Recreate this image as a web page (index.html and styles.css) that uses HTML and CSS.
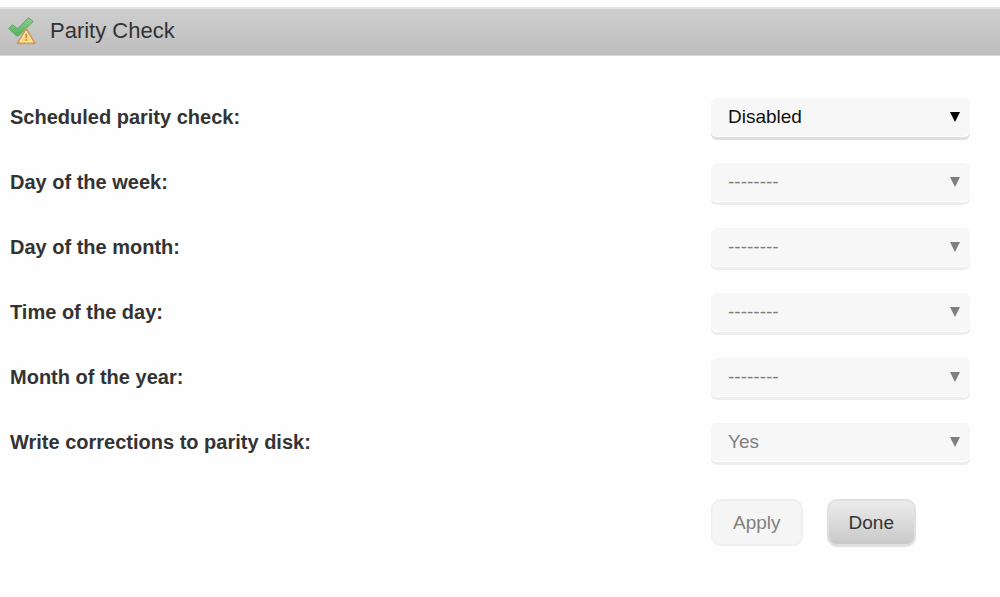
FILE: index.html
```html
<!DOCTYPE html>
<html lang="en">
<head>
<meta charset="utf-8">
<meta name="viewport" content="width=device-width, initial-scale=1">
<title>Parity Check</title>
<link rel="stylesheet" href="styles.css">
</head>
<body>
<header class="title-bar">
  <svg class="title-icon" viewBox="0 0 28 28" aria-hidden="true">
    <defs>
      <linearGradient id="tick" x1="0" y1="0" x2="0" y2="1"><stop offset="0" stop-color="#8fce90"/><stop offset="1" stop-color="#52b05a"/></linearGradient>
      <linearGradient id="sign" x1="0" y1="0" x2="0" y2="1"><stop offset="0" stop-color="#fbe3a0"/><stop offset="1" stop-color="#f6d066"/></linearGradient>
    </defs>
    <path d="M.6 11.4 4.4 7.8l5.2 3.8L20.4.8l4.8 3.6L11 18.4Q9.4 19.8 8 18.4z" fill="url(#tick)" stroke="#5cab61" stroke-width="1" stroke-linejoin="round"/>
    <path d="M18.2 12 26.8 26.2H9.6z" fill="url(#sign)" stroke="#d29a5c" stroke-width="2" stroke-linejoin="round"/>
    <path d="M18.2 14.2 24.6 24.8H11.8z" fill="none" stroke="#fff0bd" stroke-width="1" stroke-linejoin="round"/>
    <path d="M18.2 16.8v4M18.2 22.2v1.6" stroke="#c98f35" stroke-width="1.8"/>
  </svg>
  <h1 class="title">Parity Check</h1>
</header>
<form class="settings">
  <div class="row">
    <label class="label" for="schedule">Scheduled parity check:</label>
    <div class="field"><select class="select" id="schedule"><option>Disabled</option></select></div>
  </div>
  <div class="row">
    <label class="label" for="weekday">Day of the week:</label>
    <div class="field"><select class="select" id="weekday" disabled><option>--------</option></select></div>
  </div>
  <div class="row">
    <label class="label" for="monthday">Day of the month:</label>
    <div class="field"><select class="select" id="monthday" disabled><option>--------</option></select></div>
  </div>
  <div class="row">
    <label class="label" for="time">Time of the day:</label>
    <div class="field"><select class="select" id="time" disabled><option>--------</option></select></div>
  </div>
  <div class="row">
    <label class="label" for="month">Month of the year:</label>
    <div class="field"><select class="select" id="month" disabled><option>--------</option></select></div>
  </div>
  <div class="row">
    <label class="label" for="corrections">Write corrections to parity disk:</label>
    <div class="field"><select class="select" id="corrections" disabled><option>Yes</option></select></div>
  </div>
  <div class="row">
    <div class="actions">
      <button class="button" type="submit" disabled>Apply</button>
      <button class="button" type="button">Done</button>
    </div>
  </div>
</form>
</body>
</html>
```
FILE: styles.css
```css
* {
  box-sizing: border-box;
}

body {
  margin: 0;
  padding-top: 7px;
  background: #fefefe;
  color: #333;
  font-family: "Liberation Sans", Arial, sans-serif;
}

.title-bar {
  display: flex;
  align-items: center;
  gap: 14px;
  padding: 7px 8px 9px;
  border-top: 2px solid #e3e3e3;
  border-bottom: 1px solid #d9d9d9;
  background: linear-gradient(#cecece, #bebebe);
}

.title-icon {
  width: 28px;
  height: 28px;
}

.title {
  margin: 0;
  font-size: 22px;
  font-weight: 400;
  line-height: 30px;
}

.settings {
  display: flex;
  flex-direction: column;
  gap: 23px;
  padding: 42px 10px;
}

.row {
  display: grid;
  grid-template-columns: 701fr 279fr;
}

.label {
  padding-top: 7px;
  font-size: 20px;
  font-weight: 700;
  line-height: 24px;
}

.field {
  position: relative;
  width: 259px;
  height: 42px;
}

.field::after {
  content: "";
  position: absolute;
  top: 14px;
  right: 10px;
  border: 5px solid transparent;
  border-top: 10px solid #000;
  border-bottom: 0;
  pointer-events: none;
}

.field:has(:disabled)::after {
  border-top-color: #7f7f7f;
}

.select {
  appearance: none;
  width: 100%;
  height: 39px;
  padding: 0 30px 2px 17px;
  border: 0;
  border-radius: 6px;
  background: #f7f7f7;
  box-shadow: inset 0 -1px #fff, 0 3px #dfdfdf;
  color: #111;
  font: 19px "Liberation Sans", Arial, sans-serif;
}

.select:disabled {
  box-shadow: inset 0 -1px #fff, 0 3px #eee;
  color: #808080;
  opacity: 1;
}

.actions {
  grid-column: 2;
  display: flex;
  gap: 24px;
  padding-top: 11px;
}

.button {
  height: 47px;
  padding: 0 21px;
  border: 1px solid #e0e0e0;
  border-radius: 10px;
  background: linear-gradient(#ededed, #c8c8c8);
  box-shadow: inset 0 0 0 1px #e0e0e0, 0 1px 1px #ddd;
  color: #333;
  font: 19px "Liberation Sans", Arial, sans-serif;
}

.button:disabled {
  border-color: #eee;
  background: #f5f5f5;
  box-shadow: inset 0 0 0 1px #f0f0f0;
  color: #808080;
}
```
